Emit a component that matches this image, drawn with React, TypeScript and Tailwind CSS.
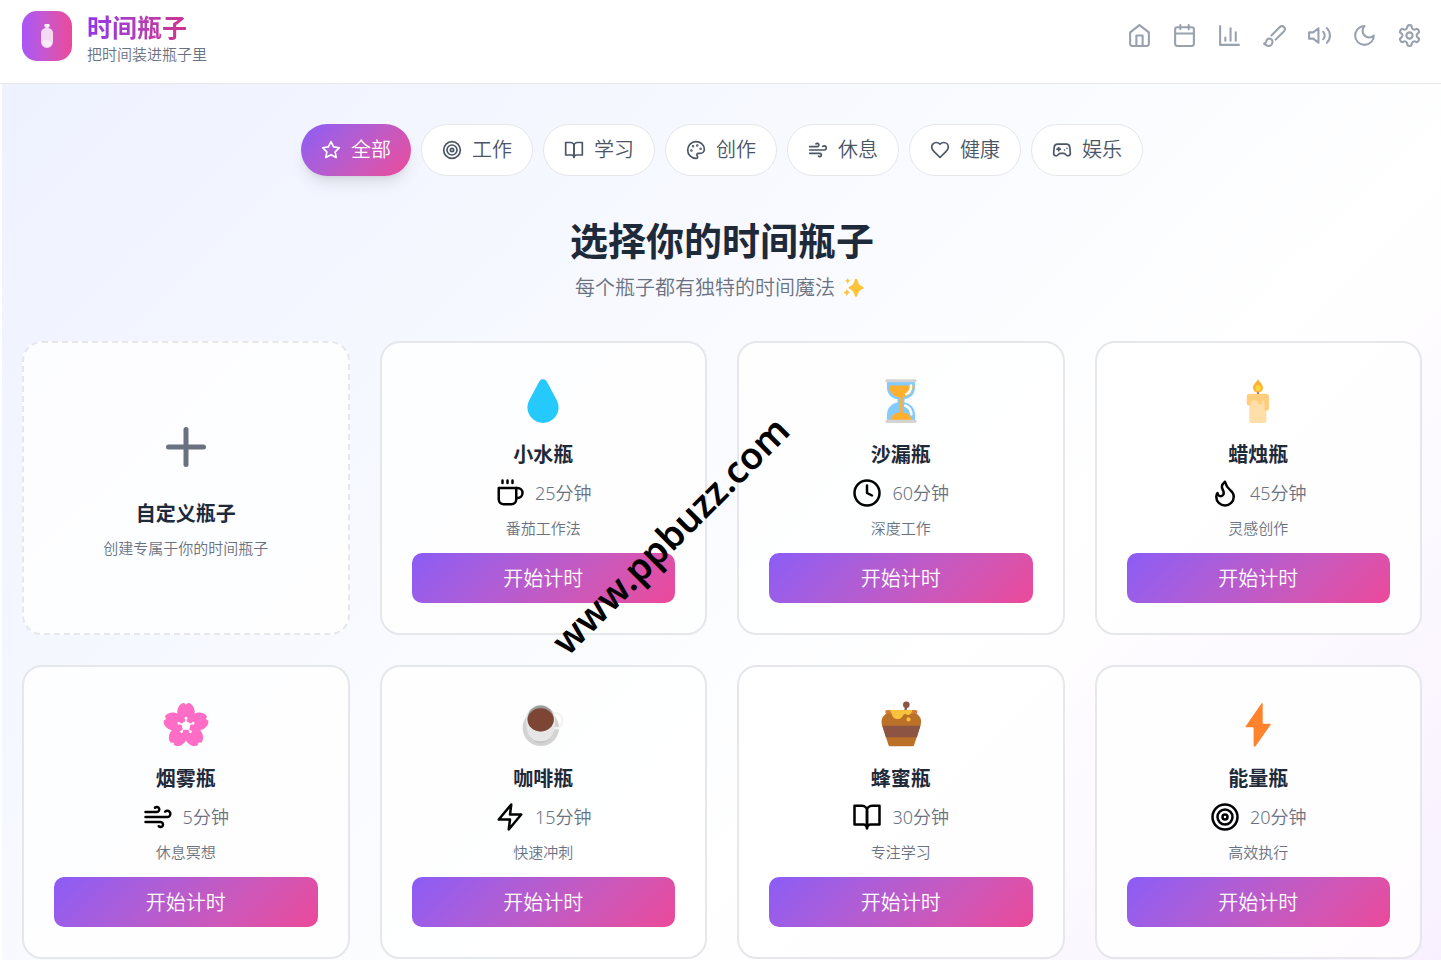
import React, { useState } from "react";
import { Clock, Flame, Gamepad2, Palette, Plus } from "lucide-react";

const Icon = ({ className, children }: any) => (
  <svg
    className={className}
    viewBox="0 0 24 24"
    fill="none"
    stroke="currentColor"
    strokeWidth="2"
    strokeLinecap="round"
    strokeLinejoin="round"
    aria-hidden="true">
    {children}
  </svg>
);

const HomeIcon = (props: any) => (
  <Icon {...props}>
    <path d="m3 9 9-7 9 7v11a2 2 0 0 1-2 2H5a2 2 0 0 1-2-2z" />
    <polyline points="9 22 9 12 15 12 15 22" />
  </Icon>
);

const CalendarIcon = (props: any) => (
  <Icon {...props}>
    <rect width="18" height="18" x="3" y="4" rx="2" />
    <path d="M16 2v4M8 2v4M3 10h18" />
  </Icon>
);

const ChartIcon = (props: any) => (
  <Icon {...props}>
    <path d="M3 3v18h18M18 17V9M13 17V5M8 17v-3" />
  </Icon>
);

const BrushIcon = (props: any) => (
  <Icon {...props}>
    <path d="m9.06 11.9 8.07-8.06a2.85 2.85 0 1 1 4.03 4.03l-8.06 8.08" />
    <path d="M7.07 14.94c-1.66 0-3 1.35-3 3.02 0 1.33-2.5 1.52-2 2.02 1.08 1.1 2.49 2.02 4 2.02 2.2 0 4-1.8 4-4.04a3.01 3.01 0 0 0-3-3.02z" />
  </Icon>
);

const VolumeIcon = (props: any) => (
  <Icon {...props}>
    <polygon points="11 5 6 9 2 9 2 15 6 15 11 19 11 5" />
    <path d="M15.54 8.46a5 5 0 0 1 0 7.07M19.07 4.93a10 10 0 0 1 0 14.14" />
  </Icon>
);

const MoonIcon = (props: any) => (
  <Icon {...props}>
    <path d="M12 3a6 6 0 0 0 9 9 9 9 0 1 1-9-9Z" />
  </Icon>
);

const SettingsIcon = (props: any) => (
  <Icon {...props}>
    <path d="M12.22 2h-.44a2 2 0 0 0-2 2v.18a2 2 0 0 1-1 1.73l-.43.25a2 2 0 0 1-2 0l-.15-.08a2 2 0 0 0-2.73.73l-.22.38a2 2 0 0 0 .73 2.73l.15.1a2 2 0 0 1 1 1.72v.51a2 2 0 0 1-1 1.74l-.15.09a2 2 0 0 0-.73 2.73l.22.38a2 2 0 0 0 2.73.73l.15-.08a2 2 0 0 1 2 0l.43.25a2 2 0 0 1 1 1.73V20a2 2 0 0 0 2 2h.44a2 2 0 0 0 2-2v-.18a2 2 0 0 1 1-1.73l.43-.25a2 2 0 0 1 2 0l.15.08a2 2 0 0 0 2.73-.73l.22-.39a2 2 0 0 0-.73-2.73l-.15-.08a2 2 0 0 1-1-1.74v-.5a2 2 0 0 1 1-1.74l.15-.09a2 2 0 0 0 .73-2.73l-.22-.38a2 2 0 0 0-2.73-.73l-.15.08a2 2 0 0 1-2 0l-.43-.25a2 2 0 0 1-1-1.73V4a2 2 0 0 0-2-2z" />
    <circle cx="12" cy="12" r="3" />
  </Icon>
);

const StarIcon = (props: any) => (
  <Icon {...props}>
    <polygon points="12 2 15.09 8.26 22 9.27 17 14.14 18.18 21.02 12 17.77 5.82 21.02 7 14.14 2 9.27 8.91 8.26 12 2" />
  </Icon>
);

const TargetIcon = (props: any) => (
  <Icon {...props}>
    <circle cx="12" cy="12" r="10" />
    <circle cx="12" cy="12" r="6" />
    <circle cx="12" cy="12" r="2" />
  </Icon>
);

const BookIcon = (props: any) => (
  <Icon {...props}>
    <path d="M2 3h6a4 4 0 0 1 4 4v14a3 3 0 0 0-3-3H2z" />
    <path d="M22 3h-6a4 4 0 0 0-4 4v14a3 3 0 0 1 3-3h7z" />
  </Icon>
);

const WindIcon = (props: any) => (
  <Icon {...props}>
    <path d="M17.7 7.7a2.5 2.5 0 1 1 1.8 4.3H2" />
    <path d="M9.6 4.6A2 2 0 1 1 11 8H2" />
    <path d="M12.6 19.4A2 2 0 1 0 14 16H2" />
  </Icon>
);

const HeartIcon = (props: any) => (
  <Icon {...props}>
    <path d="M19 14c1.49-1.46 3-3.21 3-5.5A5.5 5.5 0 0 0 16.5 3c-1.76 0-3 .5-4.5 2-1.5-1.5-2.74-2-4.5-2A5.5 5.5 0 0 0 2 8.5c0 2.3 1.5 4.05 3 5.5l7 7Z" />
  </Icon>
);

const CoffeeIcon = (props: any) => (
  <Icon {...props}>
    <path d="M17 8h1a4 4 0 1 1 0 8h-1" />
    <path d="M3 8h14v9a4 4 0 0 1-4 4H7a4 4 0 0 1-4-4Z" />
    <path d="M6 2v2M10 2v2M14 2v2" />
  </Icon>
);

const ZapIcon = (props: any) => (
  <Icon {...props}>
    <polygon points="13 2 3 14 12 14 11 22 21 10 12 10 13 2" />
  </Icon>
);

const Emoji = ({ children }: any) => (
  <svg className="size-[50px]" viewBox="0 0 32 32" aria-hidden="true">
    {children}
  </svg>
);

const Droplet = () => (
  <Emoji>
    <path
      fill="#26c9fc"
      d="M13.7 3.3C14.7 1.6 17.3 1.6 18.3 3.3L24.6 15Q26 17.4 26 20A10 10 0 0 1 6 20Q6 17.4 7.4 15Z"
    />
  </Emoji>
);

const Hourglass = () => (
  <Emoji>
    <path
      fill="#83cbff"
      d="M7 3.5H25V7C25 11 22.5 14.3 18.2 14.8V17C22.5 17.6 25 21 25 25V28.5H7V25C7 21 9.5 17.6 13.8 17V14.8C9.5 14.3 7 11 7 7Z"
    />
    <path
      fill="#ffb02e"
      d="M8.3 6H23.7C23.7 10.5 21 13 17 13.6V23.3C20.3 23.6 22.6 25.3 22.8 28.3H9.2C9.4 25.3 11.7 23.6 15 23.3V13.6C11 13 8.3 10.5 8.3 6Z"
    />
    <path
      d="M22.4 6.2C22.4 9.4 21.4 10.8 19.4 11.6M18.8 19C21.3 20 22.5 22 22.6 24.5"
      fill="none"
      stroke="#fff"
      strokeWidth="1.7"
      strokeLinecap="round"
    />
    <rect x="6" y="2" width="20" height="2" rx="1" fill="#d3d3d3" />
    <rect x="6" y="28" width="20" height="2" rx="1" fill="#d3d3d3" />
  </Emoji>
);

const Candle = () => (
  <Emoji>
    <rect x="15.4" y="9" width="1.2" height="4" fill="#636363" />
    <path
      fill="#ffb02e"
      d="M16 1.8C16.5 3.8 19.2 5.3 19.2 7.5A3.2 3.1 0 0 1 12.8 7.5C12.8 5.3 15.5 3.8 16 1.8Z"
    />
    <circle cx="16" cy="7.6" r="1.8" fill="#fcd53f" />
    <path
      fill="#ffdea7"
      d="M10.4 13H21.4V29A1 1 0 0 1 20.4 30H11.4A1 1 0 0 1 10.4 29Z"
    />
    <path
      fill="#ffce7c"
      d="M10.8 11.3H21A2 2 0 0 1 23 13.3V20.8A1.4 1.5 0 0 1 20.2 20.8V17.2Q20.2 15.8 19.4 15.8T18.6 17A1.3 1.3 0 0 1 16 17Q16 15.6 15 15.6H13Q11.4 15.6 11.4 17.4A1.3 1.4 0 0 1 8.8 17.4V13.3A2 2 0 0 1 10.8 11.3Z"
    />
  </Emoji>
);

const petals = [0, 72, 144, 216, 288];

const Blossom = () => (
  <Emoji>
    <circle cx="16" cy="16.4" r="7.4" fill="#ff6dc6" />
    {petals.map(angle => (
      <path
        key={angle}
        transform={`rotate(${angle} 16 16.4)`}
        fill="#ff6dc6"
        d="M16 17L12 12.6C10.5 11 10.3 9 10.4 7.2C10.7 4.6 12.2 2.3 14.3 1.9C14.9 1.8 15.2 2.1 15.4 2.7H16.6C16.8 2.1 17.1 1.8 17.7 1.9C19.8 2.3 21.3 4.6 21.6 7.2C21.7 9 21.5 11 20 12.6Z"
      />
    ))}
    <circle cx="16" cy="16.4" r="2.5" fill="#fff" />
    {petals.map(angle => (
      <g key={angle} transform={`rotate(${angle} 16 16.4)`} fill="#fff">
        <path d="M14.2 14.8L15.6 13.4V11.5H16.4V13.4L17.8 14.8Z" />
        <circle cx="16" cy="11.6" r="0.9" />
      </g>
    ))}
  </Emoji>
);

const CoffeeCup = () => (
  <Emoji>
    <circle cx="14.6" cy="17.8" r="11.7" fill="#d3d3d3" />
    <ellipse cx="24.6" cy="13.2" rx="3.8" ry="5" fill="none" stroke="#f4f4f4" strokeWidth="1.5" />
    <path
      fill="#b4b4b4"
      d="M6.5 18.5C7 24.5 10 27.2 14.5 27.2S22 24.5 22.5 18.5Z"
    />
    <path
      fill="#e6e6e6"
      d="M5.2 12.3A9.3 9.3 0 0 1 23.8 12.3C23.8 21 21.5 26.6 14.5 26.6S5.2 21 5.2 12.3Z"
    />
    <ellipse cx="14.5" cy="11.8" rx="8.4" ry="8.3" fill="#9b9b9b" />
    <ellipse cx="14.5" cy="12.7" rx="8.4" ry="7.4" fill="#7d4533" />
  </Emoji>
);

const HoneyPot = () => (
  <Emoji>
    <path d="M19.4 3.5L18.6 8" stroke="#8c5543" strokeWidth="1.5" />
    <circle cx="19.4" cy="3.1" r="2.1" fill="#8c5543" />
    <path
      fill="#bb7127"
      d="M7 8L4.6 10.6C3.4 12 3.4 14 3.8 16L8 28.8Q8.2 29.6 9 29.6H23.4Q24.2 29.6 24.4 28.8L28.6 16C29 14 29 12 27.8 10.6L25.4 8Z"
    />
    <path fill="#8c5543" d="M4.1 16.4H28.4L26.2 23.8H6.3Z" />
    <path fill="#d67d3a" d="M7 6.4H25.4A1 1 0 0 1 25.4 8.6H7A1 1 0 0 1 7 6.4Z" />
    <path
      fill="#f9c23c"
      d="M8.8 6.4H23.2Q22.8 9.4 20.8 9.6Q19.6 9.6 18.6 8.8Q17.6 8.8 17 10.4Q16 12.2 13.8 12.2Q11 12.2 10.2 9.4Q9.8 7.6 8.8 6.4Z"
    />
    <circle cx="20.8" cy="12.4" r="1.3" fill="#f9c23c" />
  </Emoji>
);

const Lightning = () => (
  <Emoji>
    <path
      fill="#ff822d"
      d="M18.2 2.2Q18.9 1.5 19 2.4V14.6Q19 15.2 19.6 15.2H23.8Q24.5 15.3 24.1 15.9L14.5 29.4Q13.4 30.4 13.2 29.4V18Q13.1 17.5 12.6 17.5H8.4Q7.7 17.4 8.1 16.8Z"
    />
  </Emoji>
);

const tools = [
  { label: "首页", icon: HomeIcon },
  { label: "日历", icon: CalendarIcon },
  { label: "统计", icon: ChartIcon },
  { label: "主题", icon: BrushIcon },
  { label: "声音", icon: VolumeIcon },
  { label: "夜间模式", icon: MoonIcon },
  { label: "设置", icon: SettingsIcon },
];

const categories = [
  { name: "全部", icon: StarIcon },
  { name: "工作", icon: TargetIcon },
  { name: "学习", icon: BookIcon },
  { name: "创作", icon: Palette },
  { name: "休息", icon: WindIcon },
  { name: "健康", icon: HeartIcon },
  { name: "娱乐", icon: Gamepad2 },
];

const bottles = [
  { name: "小水瓶", minutes: 25, usage: "番茄工作法", emoji: Droplet, icon: CoffeeIcon },
  { name: "沙漏瓶", minutes: 60, usage: "深度工作", emoji: Hourglass, icon: Clock },
  { name: "蜡烛瓶", minutes: 45, usage: "灵感创作", emoji: Candle, icon: Flame },
  { name: "烟雾瓶", minutes: 5, usage: "休息冥想", emoji: Blossom, icon: WindIcon },
  { name: "咖啡瓶", minutes: 15, usage: "快速冲刺", emoji: CoffeeCup, icon: ZapIcon },
  { name: "蜂蜜瓶", minutes: 30, usage: "专注学习", emoji: HoneyPot, icon: BookIcon },
  { name: "能量瓶", minutes: 20, usage: "高效执行", emoji: Lightning, icon: TargetIcon },
];

const Header = () => (
  <header className="flex items-start justify-between border-b border-gray-200 bg-white pt-[11px] pr-[19px] pb-[18px] pl-[22px]">
    <div className="flex items-start gap-[15px]">
      <div className="flex size-[50px] items-center justify-center rounded-[15px] bg-linear-to-r from-[#a855f7] to-[#ec4899]">
        <svg className="h-6 w-3" viewBox="0 0 36 72" aria-hidden="true">
          <rect x="10" width="16" height="9" rx="3" fill="#fff" fillOpacity="0.9" />
          <path
            d="M13 8H23V12C31 14 36 19 36 27V54A18 18 0 0 1 0 54V27C0 19 5 14 13 12Z"
            fill="#fff"
            fillOpacity="0.78"
          />
          <ellipse cx="18" cy="58" rx="14" ry="10" fill="#fff" fillOpacity="0.5" />
        </svg>
      </div>
      <div>
        <h1 className="bg-linear-to-r from-[#9333ea] to-[#db2777] bg-clip-text text-[25px] leading-8 font-bold text-transparent">
          时间瓶子
        </h1>
        <p className="text-[15px] leading-[22px] font-[350] text-gray-500">把时间装进瓶子里</p>
      </div>
    </div>
    <div className="flex h-[49px] items-center gap-5 text-gray-400">
      {tools.map(({ label, icon: ToolIcon }) => (
        <button key={label} type="button" aria-label={label}>
          <ToolIcon className="size-[25px]" />
        </button>
      ))}
    </div>
  </header>
);

const BottleCard = ({ bottle }: any) => {
  const { name, minutes, usage, emoji: BottleEmoji, icon: BottleIcon } = bottle;

  return (
    <div className="rounded-[20px] border-2 border-gray-200 bg-white/80 p-[30px] text-center">
      <div className="mb-[11px] flex h-14 items-center justify-center">
        <BottleEmoji />
      </div>
      <h3 className="mb-[7px] text-[20px] leading-[30px] font-bold text-gray-800">{name}</h3>
      <div className="flex h-8 items-center justify-center gap-2.5">
        <BottleIcon className="size-[30px] text-black" />
        <span className="text-[18px] leading-8 font-[350] text-gray-500">{minutes}分钟</span>
      </div>
      <p className="mt-2 text-[15px] leading-[22px] font-[350] text-gray-500">{usage}</p>
      <button
        type="button"
        className="mt-3.5 h-[50px] w-full rounded-[10px] bg-linear-135 from-[#8b5cf6] to-[#ec4899] pt-0.5 text-[20px] font-[350] text-white">
        开始计时
      </button>
    </div>
  );
};

const App = () => {
  const [active, setActive] = useState("全部");

  return (
    <div className="relative min-h-screen overflow-hidden bg-white [font-family:'Noto_Sans','Noto_Sans_CJK_SC',sans-serif]">
      <Header />

      <main className="ml-0.5 bg-linear-135 from-[#eef2ff] via-white via-65% to-[#f8f0ff] pt-10 pr-[19px] pb-5 pl-5">
        <nav className="flex flex-wrap justify-center gap-2.5">
          {categories.map(({ name, icon: CategoryIcon }) => (
            <button
              key={name}
              type="button"
              onClick={() => setActive(name)}
              className={
                "flex h-[52px] items-center gap-2.5 rounded-full px-5 text-[20px] font-[350] " +
                (active === name
                  ? "bg-linear-135 from-[#8b5cf6] to-[#ec4899] text-white shadow-lg"
                  : "border border-gray-200 bg-white text-gray-600")
              }>
              <CategoryIcon className="size-5" />
              {name}
            </button>
          ))}
        </nav>

        <h2 className="mt-[38px] text-center text-[38px] leading-[52px] font-bold text-gray-800">
          选择你的时间瓶子
        </h2>
        <p className="mt-2 flex items-center justify-center gap-2 text-[20px] leading-7 font-[350] text-gray-500">
          每个瓶子都有独特的时间魔法
          <svg className="mr-1 size-[22px]" viewBox="0 0 64 64" fill="#fcc53a" aria-hidden="true">
            <path d="M38 5Q41 5 42 9C45 21 49 25 59 29Q63 31 59 34C49 38 45 42 42 54Q41 58 38 58T34 54C31 42 27 38 18 34Q14 31 18 29C27 25 31 21 34 9Q35 5 38 5Z" />
            <path d="M14 3Q15 9 21 11Q15 13 14 20Q12 13 6 11Q12 9 14 3Z" />
            <path d="M11 35Q13 43 20 45Q13 47 11 56Q9 47 2 45Q9 43 11 35Z" />
          </svg>
        </p>

        <div className="mt-[39px] grid grid-cols-4 gap-[30px]">
          <button
            type="button"
            className="flex flex-col items-center justify-center rounded-[20px] border-2 border-dashed border-gray-200 bg-white/80 p-[30px]">
            <Plus className="size-[60px] text-gray-500" />
            <span className="mt-[22px] text-[20px] leading-[30px] font-bold text-gray-800">
              自定义瓶子
            </span>
            <span className="mt-2 text-[15px] leading-[22px] font-[350] text-gray-500">
              创建专属于你的时间瓶子
            </span>
          </button>
          {bottles.map(bottle => (
            <BottleCard key={bottle.name} bottle={bottle} />
          ))}
        </div>
      </main>

      {/* site stamp laid diagonally over the cards */}
      <div className="pointer-events-none absolute top-[510px] left-[470px] w-[400px] -rotate-45 text-center text-[37px] leading-[50px] font-semibold text-black">
        www.ppbuzz.com
      </div>
    </div>
  );
};

export default App;
